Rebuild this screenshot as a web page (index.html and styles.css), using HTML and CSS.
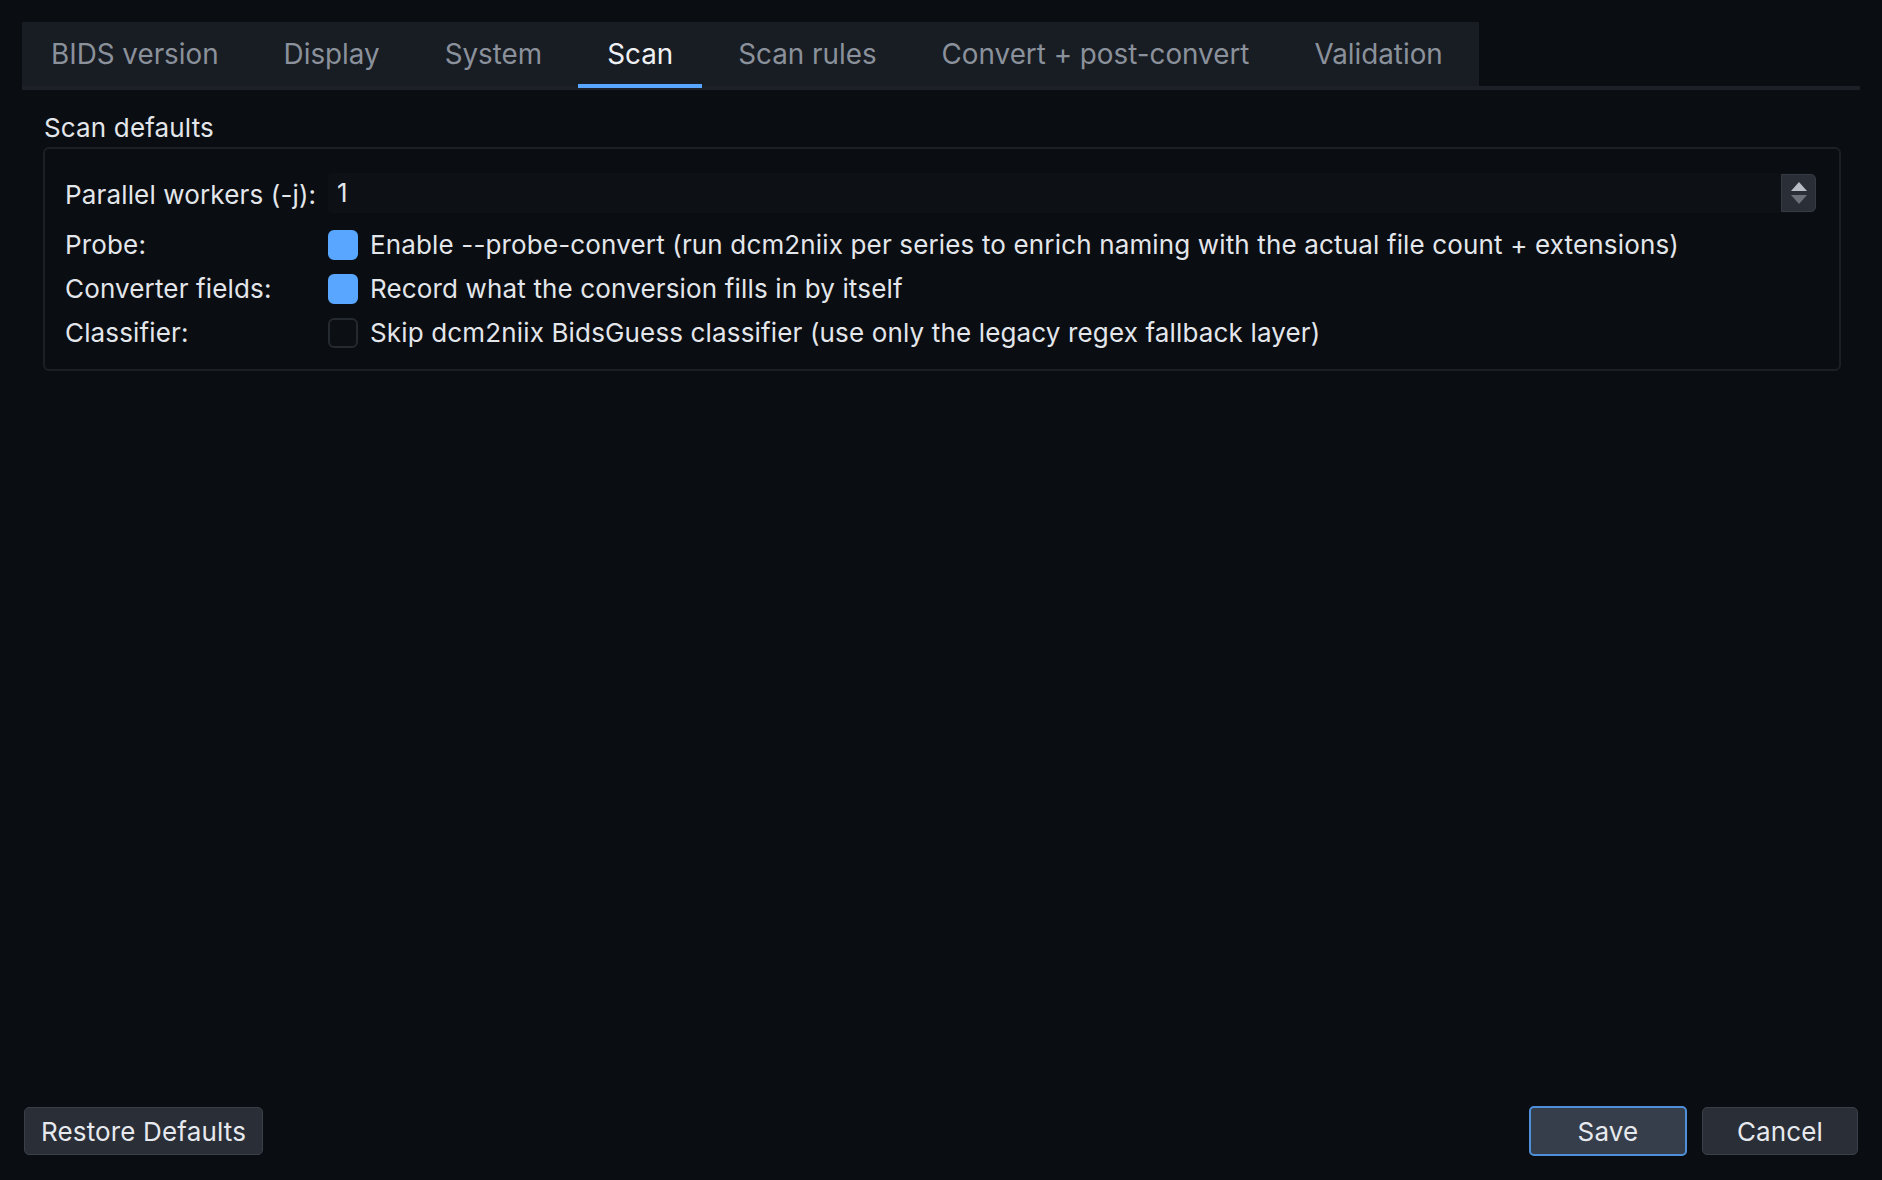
FILE: index.html
```html
<!DOCTYPE html>
<html lang="en">
<head>
    <meta charset="UTF-8">
    <title>Preferences</title>
    <link rel="stylesheet" href="styles.css">
</head>
<body>
    <div class="prefs-dialog">
        <div class="prefs-tabbar">
            <div class="prefs-tabs">
                <a class="prefs-tab">BIDS version</a>
                <a class="prefs-tab">Display</a>
                <a class="prefs-tab">System</a>
                <a class="prefs-tab active">Scan</a>
                <a class="prefs-tab">Scan rules</a>
                <a class="prefs-tab">Convert + post-convert</a>
                <a class="prefs-tab">Validation</a>
            </div>
        </div>

        <div class="prefs-page">
            <div class="group-title">Scan defaults</div>
            <div class="group-box">
                <div class="form-label">Parallel workers (-j):</div>
                <div class="spin-box">
                    <span class="spin-value">1</span>
                    <span class="spin-buttons">
                        <svg width="20" height="28" viewBox="0 0 20 28">
                            <polygon points="10,3 18,12 2,12" fill="#b9bec6"/>
                            <polygon points="2,16 18,16 10,25" fill="#6c717a"/>
                        </svg>
                    </span>
                </div>

                <div class="form-label">Probe:</div>
                <label class="check-row"><span class="check-box checked"></span>Enable --probe-convert (run dcm2niix per series to enrich naming with the actual file count + extensions)</label>

                <div class="form-label">Converter fields:</div>
                <label class="check-row"><span class="check-box checked"></span>Record what the conversion fills in by itself</label>

                <div class="form-label">Classifier:</div>
                <label class="check-row"><span class="check-box"></span>Skip dcm2niix BidsGuess classifier (use only the legacy regex fallback layer)</label>
            </div>
        </div>

        <div class="prefs-footer">
            <button class="btn">Restore Defaults</button>
            <div class="footer-right">
                <button class="btn btn-default">Save</button>
                <button class="btn btn-cancel">Cancel</button>
            </div>
        </div>
    </div>
</body>
</html>
```

FILE: styles.css
```css
html, body {
    margin: 0;
    background-color: #0a0d12;
}

body {
    font-family: Inter, "Noto Sans", sans-serif;
    font-size: 26px;
    line-height: 30px;
    letter-spacing: 0.15px;
    color: #e3e6ea;
}

.prefs-dialog {
    box-sizing: border-box;
    height: 1180px;
    display: flex;
    flex-direction: column;
    padding: 22px 22px 24px 22px;
}

/* Tab bar */
.prefs-tabbar {
    border-bottom: 4px solid #1d2127;
}

.prefs-tabs {
    display: inline-flex;
    height: 64px;
    background-color: #181c23;
    padding-right: 7px;
}

.prefs-tab {
    position: relative;
    display: flex;
    align-items: center;
    padding: 0 29px;
    margin-right: 7px;
    color: #8a919b;
    font-size: 27.8px;
    letter-spacing: 0;
    cursor: pointer;
}

.prefs-tab:last-child {
    margin-right: 0;
}

.prefs-tab.active {
    color: #eef0f3;
}

.prefs-tab.active::after {
    content: "";
    position: absolute;
    left: 0;
    right: 0;
    bottom: -2px;
    height: 4px;
    background-color: #58a6ff;
}

/* Page */
.prefs-page {
    flex: 1;
}

.group-title {
    margin: 23px 0 0 22px;
}

.group-box {
    margin: 4px 19px 0 21px;
    border: 2px solid #1c2026;
    border-radius: 6px;
    padding: 24px 23px 21px 20px;
    display: grid;
    grid-template-columns: 263px 1fr;
    row-gap: 14px;
    align-items: center;
}

.form-label {
    white-space: nowrap;
}

.spin-box {
    display: flex;
    align-items: center;
    justify-content: space-between;
    height: 40px;
    background-color: #0d1116;
    border-radius: 4px;
    margin-bottom: 3px;
}

.spin-value {
    padding-left: 9px;
}

.spin-buttons {
    display: flex;
    align-items: center;
    justify-content: center;
    width: 35px;
    height: 38px;
    background-color: #2a2e36;
    border: 1px solid #353a42;
    border-radius: 0 5px 5px 0;
    box-sizing: border-box;
}

.check-row {
    display: flex;
    align-items: center;
    height: 30px;
    white-space: nowrap;
}

.check-box {
    box-sizing: border-box;
    width: 30px;
    height: 30px;
    margin-right: 12px;
    border: 2px solid #252930;
    border-radius: 6px;
    background-color: #0c0f14;
}

.check-box.checked {
    border-color: #58a6ff;
    background-color: #58a6ff;
}

/* Footer buttons */
.prefs-footer {
    display: flex;
    align-items: center;
    justify-content: space-between;
    padding: 0 2px;
}

.footer-right {
    display: flex;
    align-items: center;
    gap: 15px;
}

.btn {
    box-sizing: border-box;
    height: 48px;
    padding: 0 16px;
    font-family: inherit;
    font-size: 26px;
    letter-spacing: 0.15px;
    color: #e6e9ee;
    background-color: #2a2e36;
    border: 1px solid #3b4048;
    border-radius: 5px;
}

.btn-default {
    width: 158px;
    height: 50px;
    background-color: #363e4b;
    border: 2px solid #4f8fd9;
}

.btn-cancel {
    width: 156px;
}
```
